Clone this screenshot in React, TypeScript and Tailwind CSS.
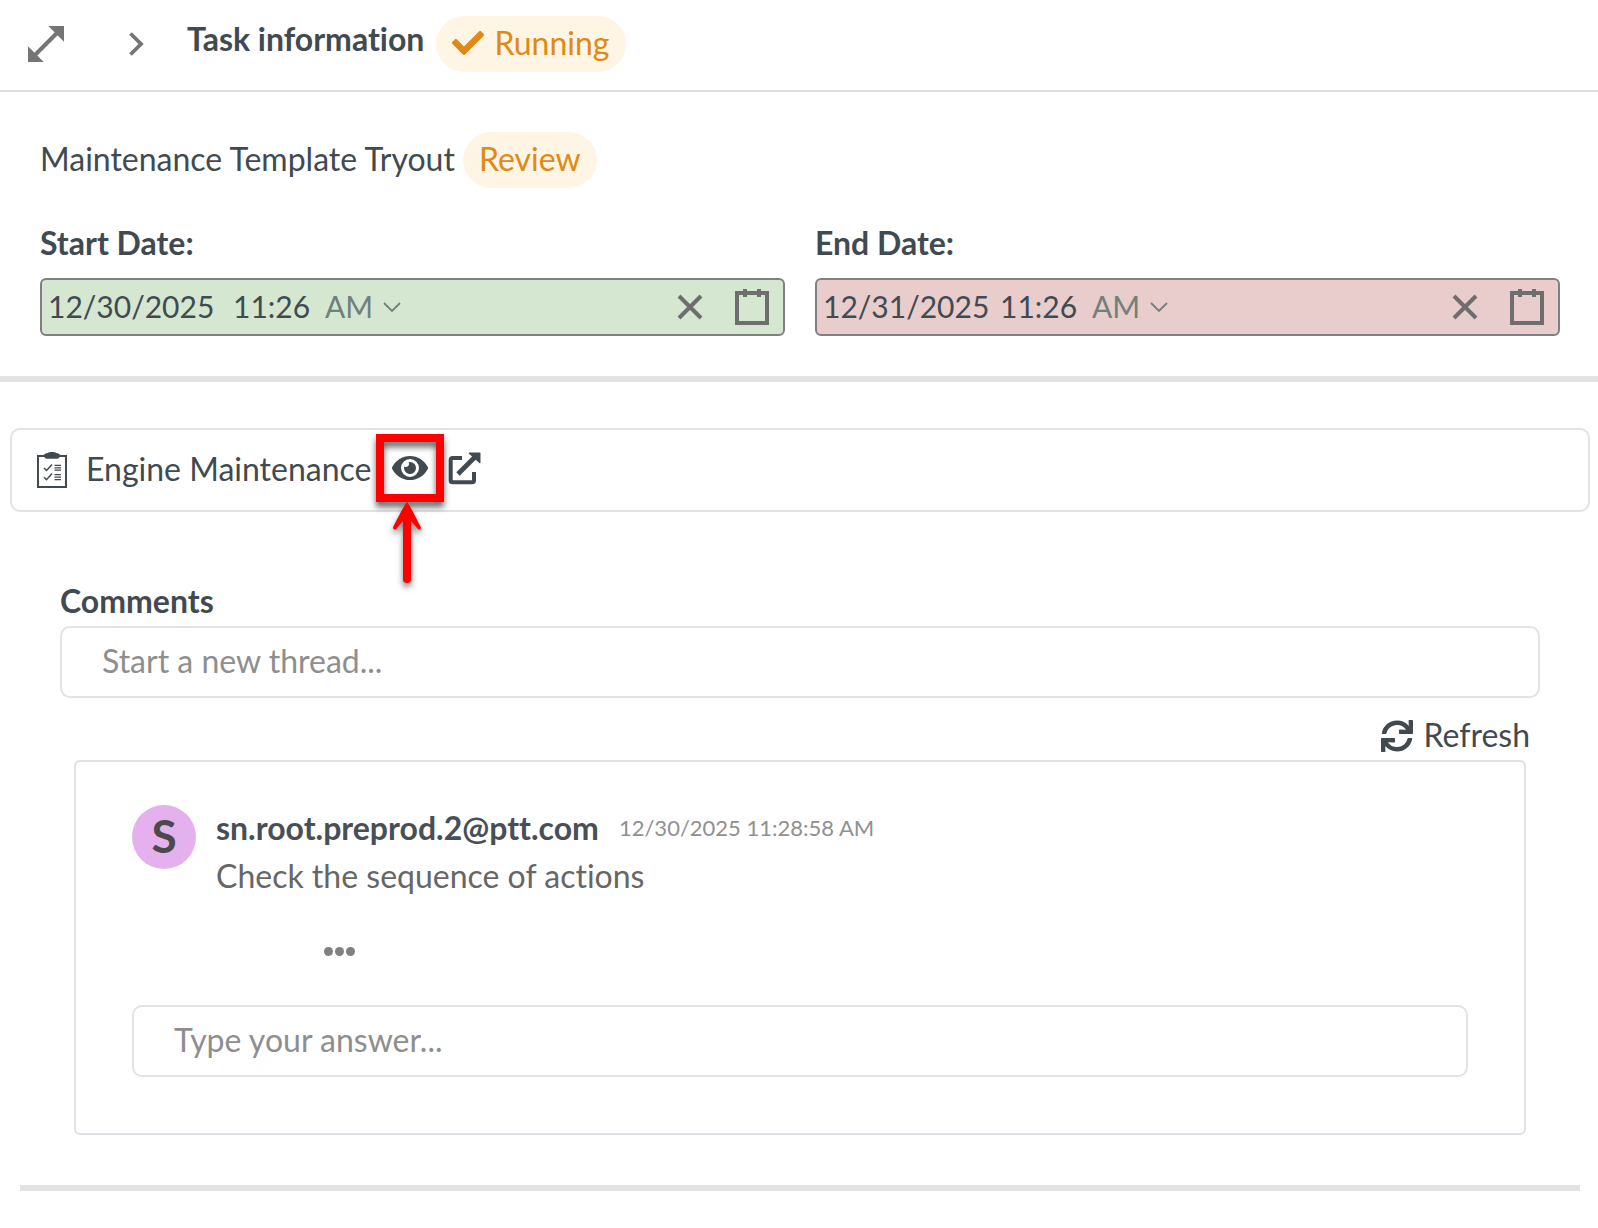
import { useState } from 'react';
import { FaCheck, FaEye, FaSync } from 'react-icons/fa';

const dateFields = [
  { id: 'start', label: 'Start Date:', date: '12/30/2025', time: '11:26', color: 'bg-[#d5e7d1]', dateWidth: 'w-[185px]' },
  { id: 'end', label: 'End Date:', date: '12/31/2025', time: '11:26', color: 'bg-[#e9cdcd]', dateWidth: 'w-[177px]' },
];

function ExpandIcon() {
  return (
    <svg viewBox="0 0 36 36" className="size-9" fill="currentColor">
      <path d="M20.3 0H36v15.7zM0 20.3V36h15.7z" />
      <path d="M7 29 29 7" stroke="currentColor" strokeWidth="4" />
    </svg>
  );
}

function ChevronRightIcon() {
  return (
    <svg viewBox="0 0 16 24" className="h-6 w-4" fill="none" stroke="currentColor" strokeWidth="3.8">
      <path d="M2.500 1.500 13 12 2.500 22.500" />
    </svg>
  );
}

function ChevronDownIcon() {
  return (
    <svg viewBox="0 0 18 10" className="pointer-events-none h-[10px] w-[18px]" fill="none" stroke="currentColor" strokeWidth="1.8">
      <path d="M1 1l8 8 8-8" />
    </svg>
  );
}

function CloseIcon() {
  return (
    <svg viewBox="0 0 26 26" className="size-[26px]" fill="none" stroke="currentColor" strokeWidth="4">
      <path d="M2 2l22 22M24 2L2 24" />
    </svg>
  );
}

function CalendarIcon() {
  return (
    <svg viewBox="0 0 34 36" className="h-9 w-[34px]" fill="none" stroke="currentColor" strokeWidth="4">
      <path d="M2 4h30v30H2zM10 0v8M24 0v8" />
    </svg>
  );
}

function ChecklistIcon() {
  return (
    <svg viewBox="0 0 30 36" className="h-9 w-[30px]" fill="none" stroke="currentColor">
      <path d="M1 4h28v31H1z" strokeWidth="2" />
      <path d="M7 3.500C7 1.500 9 1.500 10.500 1 11.500 0 13 0 15 0s3.500 0 4.500 1C21 1.500 23 1.500 23 3.500S21.500 6.800 20 6.800H10C8.500 6.800 7 5.500 7 3.500z" fill="currentColor" stroke="none" />
      <path d="M7 16l2.500 2.500L15 12.500M7 25.200l2.500 2.500L15 21.500" strokeWidth="1.500" />
      <path d="M17.500 13.400h6.500M17.500 15.800h6.500M17.500 18.100h6.500M17.500 22.700h6.500M17.500 25.200h6.500M17.500 27.700h6.500" strokeWidth="1.200" />
    </svg>
  );
}

function OpenIcon() {
  return (
    <svg viewBox="0 0 33 33" className="size-[33px]" fill="none" stroke="currentColor">
      <path d="M14 6H4.500a1.800 1.800 0 0 0-1.800 1.800v20.600a1.800 1.800 0 0 0 1.800 1.800h19.700a1.800 1.800 0 0 0 1.800-1.800V20" strokeWidth="4" />
      <path d="M10 22 28 4" strokeWidth="4.800" />
      <path d="M21.500.5h10.300a.7.700 0 0 1 .7.700v9.300c0 .8-.7 1-1.200.5L21 1.800c-.6-.6-.3-1.300.5-1.300z" fill="currentColor" stroke="none" />
    </svg>
  );
}

function RedArrow() {
  return (
    <svg viewBox="0 0 28 82" className="h-[82px] w-7" fill="none" stroke="#fe0000">
      <path d="M14 10v67" strokeWidth="8" strokeLinecap="round" />
      <path d="M14 0C17 3 25 20 27.800 25c.8 2-1.800 3.500-3 2L18 19h-8l-6.800 8c-1.200 1.500-3.800 0-3-2C3 20 11 3 14 0z" fill="#fe0000" stroke="none" />
    </svg>
  );
}

function DateField({ field }: { field: (typeof dateFields)[number] }) {
  const [date, setDate] = useState(field.date);
  const [time, setTime] = useState(field.time);

  return (
    <div className="flex-1">
      <label htmlFor={field.id} className="block font-bold">{field.label}</label>
      <div className={`mt-[15px] flex h-[58px] items-center rounded-md border-2 border-[#808080] pl-[6px] pr-[14px] text-[30px] ${field.color}`}>
        <input id={field.id} value={date} onChange={(e) => setDate(e.target.value)} className={`pb-[2px] outline-none ${field.dateWidth}`} />
        <input aria-label="Time" value={time} onChange={(e) => setTime(e.target.value)} className="w-[92px] pb-[2px] outline-none" />
        <div className="flex items-center gap-3 text-[#71807a]">
          <select aria-label="AM or PM" className="w-[46px] appearance-none pb-[2px] outline-none">
            <option>AM</option>
            <option>PM</option>
          </select>
          <ChevronDownIcon />
        </div>
        <div className="ml-auto flex items-center gap-8 text-[#6e6e6e]">
          <button
            aria-label="Clear"
            onClick={() => {
              setDate('');
              setTime('');
            }}
          >
            <CloseIcon />
          </button>
          <button aria-label="Open calendar">
            <CalendarIcon />
          </button>
        </div>
      </div>
    </div>
  );
}

export default function App() {
  return (
    <div className="min-h-screen bg-white font-['Lato',sans-serif] text-[32px] leading-10 text-[#414a51] [font-variant-ligatures:none]">
      {/* Header */}
      <header className="flex items-start border-b-2 border-[#dedede] pl-7 pt-4 pb-[18px]">
        <button aria-label="Expand" className="mt-[10px] text-[#757575]">
          <ExpandIcon />
        </button>
        <button aria-label="Back" className="mt-4 ml-16 text-[#757575]">
          <ChevronRightIcon />
        </button>
        <h1 className="ml-[43px] font-bold leading-[46px]">Task information</h1>
        <span className="ml-3 flex h-14 items-center gap-[10px] rounded-full bg-[#fff5e5] px-4 pb-[2px] text-[#de8a14]">
          <FaCheck className="size-8" />
          Running
        </span>
      </header>

      {/* Task details */}
      <section className="border-b-[6px] border-[#e3e3e3] pt-10 pr-[38px] pb-10 pl-10">
        <div className="flex items-center gap-2">
          <h2 className="pb-[2px]">Maintenance Template Tryout</h2>
          <span className="flex h-14 items-center rounded-full bg-[#fff5e5] px-4 pb-[2px] text-[#de8a14]">Review</span>
        </div>
        <div className="mt-[35px] flex gap-[30px]">
          {dateFields.map((field) => (
            <DateField key={field.id} field={field} />
          ))}
        </div>
      </section>

      {/* Linked form */}
      <section className="mr-2 ml-[10px] mt-[46px] flex h-[84px] items-center rounded-[10px] border-2 border-[#e3e3e3] pb-1 pl-[25px]">
        <div className="pt-1">
          <ChecklistIcon />
        </div>
        <span className="ml-[19px] pt-[2px]">Engine Maintenance</span>
        <div className="relative ml-[21px]">
          <button aria-label="Preview" className="block">
            <FaEye className="size-9" />
          </button>
          <div className="pointer-events-none absolute -top-4 -left-4 size-[68px] border-8 border-[#fe0000] drop-shadow-[0_5px_3px_rgba(0,0,0,0.6)]" />
          <div className="pointer-events-none absolute top-[52px] left-px drop-shadow-[0_4px_3px_rgba(0,0,0,0.5)]">
            <RedArrow />
          </div>
        </div>
        <a href="#open" aria-label="Open in new tab" className="ml-5">
          <OpenIcon />
        </a>
      </section>

      {/* Comments */}
      <section className="mt-[69px] mr-[58px] ml-[60px]">
        <label htmlFor="thread" className="block font-bold">Comments</label>
        <input
          id="thread"
          placeholder="Start a new thread..."
          className="mt-[5px] h-[72px] w-full rounded-[10px] border-2 border-[#e3e3e3] px-10 pb-[4px] outline-none placeholder:text-[#8e8e8e]"
        />
        <div className="mt-[17px] mr-[10px] flex justify-end">
          <button className="flex items-center gap-[10px]">
            <FaSync className="mt-[2px] size-8" />
            Refresh
          </button>
        </div>

        <div className="mx-[14px] mt-[5px] rounded-md border-2 border-[#e0e0e6] px-14 pt-[43px] pb-14">
          <div className="flex gap-5">
            <div className="flex size-16 items-center justify-center rounded-full bg-[#e4b1ee] pb-[2px] text-[46px] font-bold text-[#4a4a4a]">S</div>
            <div className="pt-[3px]">
              <div className="flex items-center gap-5">
                <span className="font-bold text-[#484f57]">sn.root.preprod.2@ptt.com</span>
                <time className="text-[22px] text-[#909090]">12/30/2025 11:28:58 AM</time>
              </div>
              <p className="mt-2 text-[#666]">Check the sequence of actions</p>
              <button aria-label="More actions" className="mt-[35px] ml-[108px] flex h-10 items-center gap-[2px]">
                <span className="size-[9px] rounded-full bg-[#808080]" />
                <span className="size-[9px] rounded-full bg-[#808080]" />
                <span className="size-[9px] rounded-full bg-[#808080]" />
              </button>
            </div>
          </div>
          <input
            aria-label="Answer"
            placeholder="Type your answer..."
            className="mt-[34px] h-[72px] w-full rounded-[10px] border-2 border-[#e3e3e3] px-10 pb-[4px] outline-none placeholder:text-[#8e8e8e]"
          />
        </div>
      </section>

      <hr className="mt-[50px] mr-[18px] ml-5 border-t-[6px] border-[#e3e3e3]" />
    </div>
  );
}
